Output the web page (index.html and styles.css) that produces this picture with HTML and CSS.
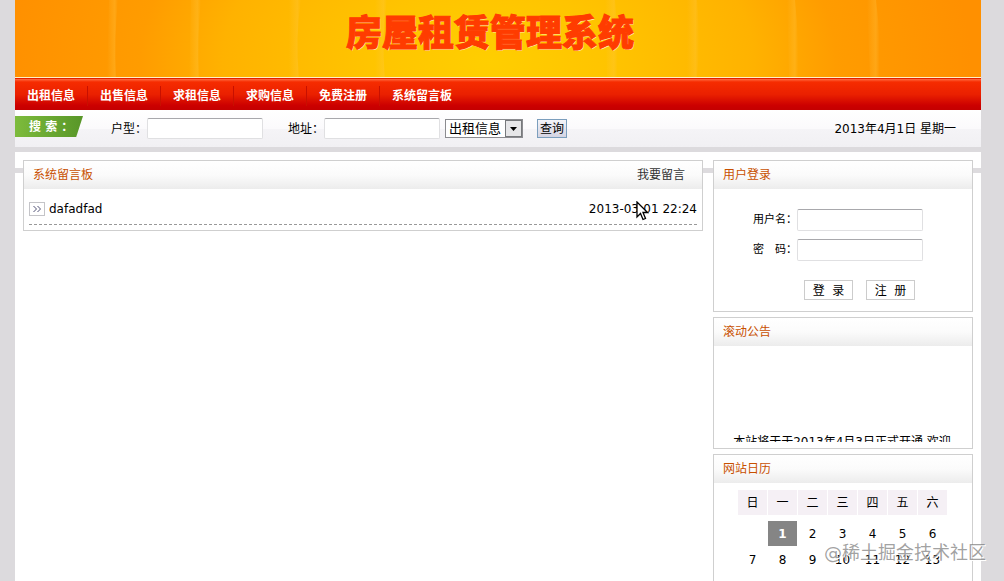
FILE: index.html
```
<!DOCTYPE html>
<html lang="zh-CN">
<head>
    <meta charset="UTF-8">
    <meta name="viewport" content="width=device-width, initial-scale=1.0">
    <title>房屋租赁管理系统</title>
    <link rel="stylesheet" href="styles.css">
</head>
<body>
    <div class="wrap">
        <header class="banner">
            <svg class="banner-lines" viewBox="0 0 966 77" preserveAspectRatio="none" aria-hidden="true">
                <defs>
                    <linearGradient id="fold" x1="0" x2="1" y1="0" y2="0">
                        <stop offset="0" stop-color="#ffc84a" stop-opacity="0"/>
                        <stop offset="0.7" stop-color="#ffc84a" stop-opacity="0.3"/>
                        <stop offset="1" stop-color="#ffc84a" stop-opacity="0"/>
                    </linearGradient>
                </defs>
                <path fill="url(#fold)" d="M94 0H103Q99 38 101 77H92Z"/>
                <path fill="url(#fold)" d="M176 0H186Q182 38 184 77H174Z"/>
                <path fill="url(#fold)" d="M274 0H286Q280 38 284 77H274Z"/>
                <path fill="url(#fold)" d="M360 0H372Q366 38 370 77H360Z"/>
                <path fill="url(#fold)" d="M590 0H600Q604 38 602 77H592Z"/>
                <path fill="url(#fold)" d="M672 0H682Q686 38 682 77H672Z"/>
                <path fill="url(#fold)" d="M772 0H780Q784 38 783 77H774Z"/>
                <path fill="url(#fold)" d="M852 0H861Q866 38 864 77H855Z"/>
            </svg>
            <h1>房屋租赁管理系统</h1>
        </header>

        <nav class="menu">
            <a href="#">出租信息</a>
            <a href="#">出售信息</a>
            <a href="#">求租信息</a>
            <a href="#">求购信息</a>
            <a href="#">免费注册</a>
            <a href="#">系统留言板</a>
        </nav>

        <form class="search">
            <strong class="search-tag">搜 索 ：</strong>
            <label for="huxing">户型：</label>
            <input type="text" id="huxing" name="huxing">
            <label for="dizhi" class="second">地址：</label>
            <input type="text" id="dizhi" name="dizhi">
            <span class="select-box">
                <select name="type" aria-label="信息类型">
                    <option>出租信息</option>
                    <option>出售信息</option>
                    <option>求租信息</option>
                    <option>求购信息</option>
                </select>
                <svg class="arrow" width="17" height="17" viewBox="0 0 17 17" aria-hidden="true">
                    <rect x="0.5" y="0.5" width="16" height="16" fill="#e6e6e8" stroke="#77797c"/>
                    <path d="M5 7H12L8.500 11Z" fill="#000"/>
                </svg>
            </span>
            <button type="submit">查询</button>
            <span class="today">2013年4月1日 星期一</span>
        </form>

        <div class="content">
            <main class="left">
                <section class="panel">
                    <div class="panel-title">
                        <h2>系统留言板</h2>
                        <a href="#">我要留言</a>
                    </div>
                    <ul class="messages">
                        <li>
                            <svg width="16" height="14" viewBox="0 0 16 14" aria-hidden="true">
                                <rect x="0.5" y="0.5" width="15" height="13" fill="#fff" stroke="#c4c4c8"/>
                                <path d="M4 4h2v1h1v1h1v2h-1v1h-1v1h-2v-1h1v-1h1v-2h-1v-1h-1zM8 4h2v1h1v1h1v2h-1v1h-1v1h-2v-1h1v-1h1v-2h-1v-1h-1z" fill="#a8a8ba"/>
                            </svg>
                            <a href="#">dafadfad</a>
                            <span class="time">2013-03-01 22:24</span>
                        </li>
                    </ul>
                </section>
            </main>

            <aside class="right">
                <section class="panel">
                    <div class="panel-title">
                        <h2>用户登录</h2>
                    </div>
                    <form class="login">
                        <div class="field">
                            <label for="user">用户名：</label>
                            <input type="text" id="user" name="user">
                        </div>
                        <div class="field">
                            <label for="pwd">密　码：</label>
                            <input type="password" id="pwd" name="pwd">
                        </div>
                        <div class="buttons">
                            <button type="submit">登&nbsp;&nbsp;录</button>
                            <button type="button">注&nbsp;&nbsp;册</button>
                        </div>
                    </form>
                </section>

                <section class="panel">
                    <div class="panel-title">
                        <h2>滚动公告</h2>
                    </div>
                    <div class="notice">
                        <p>本站将于于2013年4月3日正式开通 欢迎</p>
                    </div>
                </section>

                <section class="panel calendar">
                    <div class="panel-title">
                        <h2>网站日历</h2>
                    </div>
                    <table>
                        <thead>
                            <tr>
                                <th>日</th>
                                <th>一</th>
                                <th>二</th>
                                <th>三</th>
                                <th>四</th>
                                <th>五</th>
                                <th>六</th>
                            </tr>
                        </thead>
                        <tbody>
                            <tr>
                                <td></td>
                                <td class="current">1</td>
                                <td>2</td>
                                <td>3</td>
                                <td>4</td>
                                <td>5</td>
                                <td>6</td>
                            </tr>
                            <tr>
                                <td>7</td>
                                <td>8</td>
                                <td>9</td>
                                <td>10</td>
                                <td>11</td>
                                <td>12</td>
                                <td>13</td>
                            </tr>
                        </tbody>
                    </table>
                </section>
            </aside>
        </div>
    </div>

    <svg class="pointer" width="13" height="21" viewBox="0 0 13 21" aria-hidden="true">
        <path d="M1 1V16L4.500 12.500L7 18.500L9.500 17.500L7 11.500H11.500Z" fill="#fff" stroke="#000" stroke-width="1.300"/>
    </svg>
    <div class="watermark">@稀土掘金技术社区</div>
</body>
</html>
```

FILE: styles.css
```
* {
    box-sizing: border-box;
}
body {
    margin: 0;
    background-color: #dcdadd;
    font-family: "DejaVu Sans", "Noto Sans CJK SC", sans-serif;
    font-size: 12px;
    line-height: 18px;
    color: #000;
    overflow: hidden;
}
h1, h2, ul, p {
    margin: 0;
    padding: 0;
}
a {
    color: inherit;
    text-decoration: none;
}
input, select, button {
    font-family: inherit;
    font-size: 12px;
    margin: 0;
}
.wrap {
    display: flex;
    flex-direction: column;
    height: 100vh;
    margin: 0 23px 0 15px;
    background-color: #fff;
}

/* banner */
.banner {
    position: relative;
    flex: none;
    height: 78px;
    border-bottom: 1px solid #fff0c8;
    background: radial-gradient(ellipse 50% 400% at 49% 80%, #ffce00 0%, #ffc400 25%, #ffb200 55%, #ff9c00 72%, #ff9000 100%);
    text-align: center;
}
.banner-lines {
    position: absolute;
    left: 0;
    top: 0;
    width: 100%;
    height: 100%;
}
.banner h1 {
    position: relative;
    padding-right: 16px;
    font-size: 36px;
    font-weight: 900;
    line-height: 68px;
    color: #ff3c00;
    -webkit-text-stroke: 1px #ff3c00;
    text-shadow: 1px 1px 0 #ffe9a0;
}

/* menu */
.menu {
    display: flex;
    flex: none;
    align-items: center;
    height: 32px;
    padding-top: 2px;
    border-top: 1px solid #e02000;
    background: linear-gradient(#ff6a40 0, #f62c00 3px, #ea2000 50%, #cc0000 85%, #c40000 100%);
}
.menu a {
    padding: 0 12px;
    border-right: 1px solid #c81000;
    color: #fff;
    font-weight: bold;
    line-height: 20px;
}
.menu a:last-child {
    border-right: none;
}

/* search */
.search {
    display: flex;
    flex: none;
    align-items: center;
    height: 42px;
    border-bottom: 5px solid #dcdadd;
    background: linear-gradient(#fff, #fbfafc 50%, #f5f4f7 51%, #f1f0f3);
}
.search-tag {
    align-self: flex-start;
    width: 68px;
    height: 21px;
    margin: 6px 28px 0 0;
    padding-left: 14px;
    background: linear-gradient(to right, #7dbb3c, #589628);
    clip-path: polygon(0 0, 100% 0, 90% 100%, 0 100%);
    color: #fff;
    line-height: 22px;
}
.search input {
    width: 116px;
    height: 21px;
}
.search .second {
    margin-left: 25px;
}
.search input, .login input {
    border: 1px solid #e0e0e2;
    border-top-color: #a8a8ac;
    border-radius: 2px;
    background-color: #fff;
}
.select-box {
    position: relative;
    width: 78px;
    height: 19px;
    margin: 0 14px 0 5px;
}
.select-box select {
    display: block;
    width: 100%;
    height: 19px;
    padding: 0 0 0 3px;
    appearance: none;
    border: 1px solid #8c8c90;
    border-radius: 0;
    background-color: #fff;
    font-size: 13px;
}
.arrow {
    position: absolute;
    right: 1px;
    top: 1px;
    pointer-events: none;
}
.search button {
    height: 19px;
    padding: 0 2px;
    border: 1px solid #7b9ebd;
    background: linear-gradient(#f4f4f8, #d4d4e2);
    line-height: 16px;
}
.today {
    margin-left: auto;
    margin-right: 25px;
}

/* content */
.content {
    display: flex;
    flex: 1;
    gap: 10px;
    min-height: 0;
    padding: 8px 8px 0;
    background: linear-gradient(#dddbde, #dddbde) 0 16px / 100% 5px no-repeat;
}
.left {
    flex: 1;
}
.right {
    display: flex;
    flex-direction: column;
    width: 260px;
    gap: 5px;
}
.panel {
    border: 1px solid #cfcfcf;
    background-color: #fff;
}
.panel-title {
    display: flex;
    justify-content: space-between;
    height: 28px;
    padding: 0 17px 0 9px;
    background: linear-gradient(#fff, #fbfbfb 50%, #ececec);
    color: #333;
    line-height: 28px;
}
.panel-title h2 {
    font-size: 12px;
    font-weight: normal;
    color: #c85000;
}

.messages {
    padding: 0 5px 5px;
    list-style: none;
}
.messages li {
    display: flex;
    align-items: center;
    gap: 4px;
    height: 36px;
    padding-top: 4px;
    border-bottom: 1px dashed #999;
}
.time {
    margin-left: auto;
}

.login {
    padding: 20px 0 11px 39px;
}
.field {
    display: flex;
    align-items: center;
    margin-bottom: 8px;
}
.field label {
    width: 44px;
    font-size: 11px;
}
.login input {
    width: 126px;
    height: 22px;
}
.buttons {
    display: flex;
    gap: 13px;
    margin-top: 19px;
    padding-left: 51px;
}
.buttons button {
    width: 49px;
    height: 20px;
    padding: 0;
    border: 1px solid #ccc;
    background-color: #fff;
    line-height: 20px;
}

.notice {
    height: 96px;
    margin-bottom: 6px;
    padding: 87px 2px 0 0;
    overflow: hidden;
    text-align: center;
}

/* calendar */
.calendar {
    flex: 1;
    border-bottom: none;
}
.calendar table {
    margin: 6px 0 0 23px;
    border-spacing: 1px;
    text-align: center;
}
.calendar th, .calendar td {
    width: 29px;
    height: 25px;
    padding: 0;
}
.calendar th {
    background-color: #f5f0f5;
    font-weight: normal;
}
.calendar thead::after {
    content: "";
    display: block;
    height: 4px;
}
.calendar .current {
    background-color: #858585;
    color: #fff;
    font-weight: bold;
}

/* things floating over the page */
.pointer {
    position: absolute;
    left: 636px;
    top: 201px;
}
.watermark {
    position: absolute;
    right: 18px;
    bottom: 16px;
    color: rgba(120, 120, 120, 0.7);
    font-size: 18px;
    line-height: 24px;
    text-shadow: 1px 1px 0 #fff;
}
```
